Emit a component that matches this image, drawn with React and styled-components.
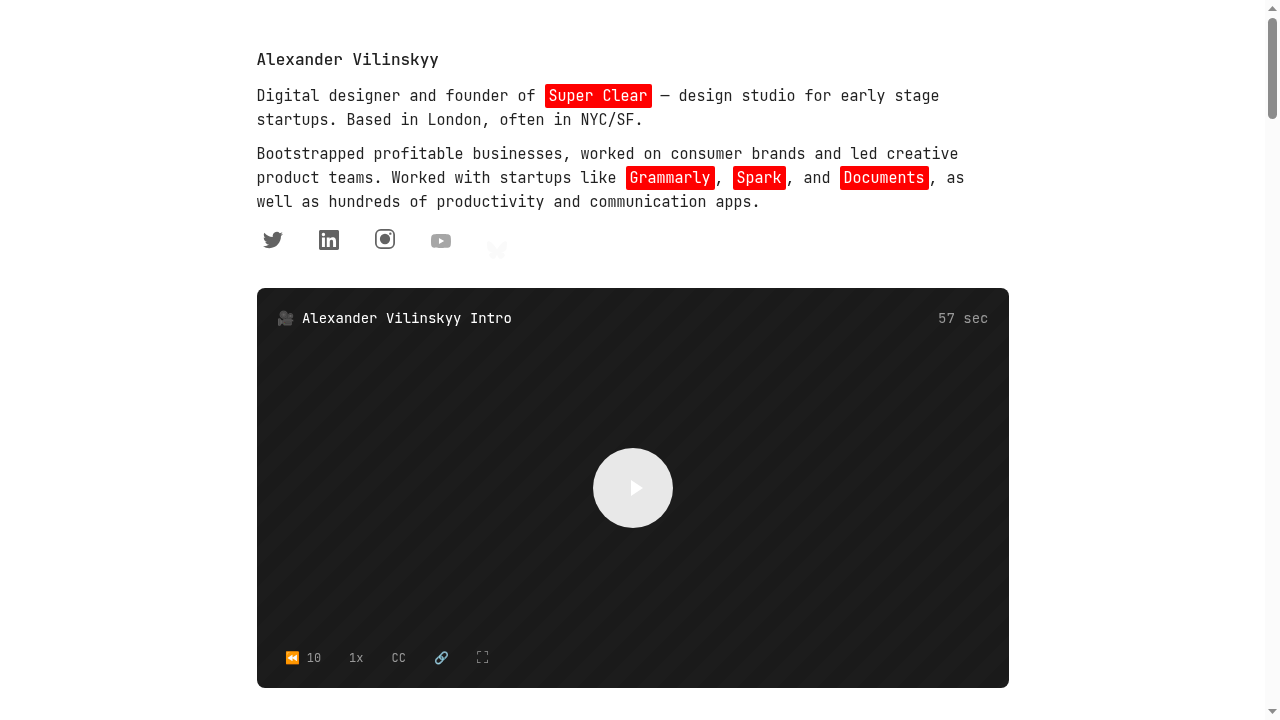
import React from "react";
import styled, { createGlobalStyle } from "styled-components";

const GlobalStyle = createGlobalStyle`
  *, *::before, *::after { box-sizing: border-box; }
  body {
    margin: 0;
    background: #fff;
    color: #222;
    font-family: "JetBrains Mono", "Liberation Mono", monospace;
    font-size: 15px;
    line-height: 24px;
  }
`;

const Shell = styled.div`
  display: flex;
  height: 100vh;
  overflow: hidden;
`;

const Page = styled.main`
  flex: 1;
  min-width: 0;
  padding: 48px 24px 32px;
`;

const Content = styled.div`
  max-width: 752px;
  margin: 0 auto;
  will-change: opacity;
`;

const Name = styled.h1`
  margin: 0 0 12px;
  font-size: 16px;
  line-height: 24px;
  font-weight: 500;
`;

const Paragraph = styled.p`
  margin: 0 0 10px;
`;

const Mark = styled.a`
  display: inline-block;
  padding: 0 4px;
  border-radius: 2px;
  background: #ff0000;
  color: #fff;
  text-decoration: none;
`;

const Socials = styled.nav`
  display: flex;
  gap: 24px;
  height: 64px;
`;

const Social = styled.a`
  display: flex;
  justify-content: center;
  width: 32px;
  height: 20px;
  margin-top: ${(p) => p.$drop}px;
  color: #222;
  opacity: ${(p) => p.$fade};

  svg { width: 20px; height: 20px; fill: currentColor; }
`;

const Player = styled.section`
  display: flex;
  flex-direction: column;
  justify-content: space-between;
  height: 400px;
  padding: 18px 20px;
  border-radius: 8px;
  background: linear-gradient(
      135deg,
      #1a1a1a 25%,
      #1c1c1c 25% 50%,
      #1a1a1a 50% 75%,
      #1c1c1c 75%
    )
    0 0 / 40px 40px;
`;

const PlayerHeader = styled.header`
  display: flex;
  justify-content: space-between;
  font-size: 14px;
`;

const PlayerTitle = styled.h2`
  margin: 0;
  font-size: 14px;
  font-weight: 400;
  color: #fff;
`;

const Duration = styled.span`
  color: #999;
`;

const PlayButton = styled.button`
  display: flex;
  align-items: center;
  justify-content: center;
  align-self: center;
  width: 80px;
  height: 80px;
  padding: 0;
  border: 0;
  border-radius: 50%;
  background: #e8e8e8;

  svg { width: 24px; height: 24px; fill: #fff; }
`;

const Controls = styled.div`
  display: flex;
  gap: 12px;
`;

const Control = styled.button`
  padding: 0 8px;
  border: 0;
  background: none;
  color: #999;
  font-family: inherit;
  font-size: ${(p) => (p.$large ? 16 : 12)}px;
  line-height: 24px;
`;

const Rail = styled.div`
  display: flex;
  flex-direction: column;
  align-items: center;
  width: 15px;
  padding: 6px 0;
  background: #fbfbfb;
`;

const Arrow = styled.svg`
  width: 9px;
  height: 5px;
  fill: #8b8b8b;
`;

const Thumb = styled.div`
  width: 9px;
  height: 101px;
  margin: 7px 0 auto;
  border-radius: 5px;
  background: #8b8b8b;
`;

const socials = [
  { name: "Twitter", drop: 6, fade: 0.7, path: "M23.953 4.57a10 10 0 01-2.825.775 4.958 4.958 0 002.163-2.723c-.951.555-2.005.959-3.127 1.184a4.92 4.92 0 00-8.384 4.482C7.69 8.095 4.067 6.13 1.64 3.162a4.822 4.822 0 00-.666 2.475c0 1.71.87 3.213 2.188 4.096a4.904 4.904 0 01-2.228-.616v.06a4.923 4.923 0 003.946 4.827 4.996 4.996 0 01-2.212.085 4.936 4.936 0 004.604 3.417 9.867 9.867 0 01-6.102 2.105c-.39 0-.779-.023-1.17-.067a13.995 13.995 0 007.557 2.209c9.053 0 13.998-7.496 13.998-13.985 0-.21 0-.42-.015-.63A9.935 9.935 0 0024 4.59z" },
  { name: "LinkedIn", drop: 6, fade: 0.7, path: "M20.447 20.452h-3.554v-5.569c0-1.328-.027-3.037-1.852-3.037-1.853 0-2.136 1.445-2.136 2.939v5.667H9.351V9h3.414v1.561h.046c.477-.9 1.637-1.85 3.37-1.85 3.601 0 4.267 2.37 4.267 5.455v6.286zM5.337 7.433a2.062 2.062 0 01-2.063-2.065 2.064 2.064 0 112.063 2.065zm1.782 13.019H3.555V9h3.564v11.452zM22.225 0H1.771C.792 0 0 .774 0 1.729v20.542C0 23.227.792 24 1.771 24h20.451C23.2 24 24 23.227 24 22.271V1.729C24 .774 23.2 0 22.222 0h.003z" },
  { name: "Instagram", drop: 5, fade: 0.7, path: "M7 0h10a7 7 0 017 7v10a7 7 0 01-7 7H7a7 7 0 01-7-7V7a7 7 0 017-7zm0 2.1A4.9 4.9 0 002.1 7v10A4.9 4.9 0 007 21.9h10a4.9 4.9 0 004.9-4.9V7A4.9 4.9 0 0017 2.1zM12 5.838a6.162 6.162 0 100 12.324 6.162 6.162 0 000-12.324zM18.406 4.155a1.44 1.44 0 100 2.881 1.44 1.44 0 000-2.881z" },
  { name: "YouTube", drop: 7, fade: 0.4, path: "M23.498 6.186a3.016 3.016 0 00-2.122-2.136C19.505 3.545 12 3.545 12 3.545s-7.505 0-9.377.505A3.017 3.017 0 00.502 6.186C0 8.07 0 12 0 12s0 3.93.502 5.814a3.016 3.016 0 002.122 2.136c1.871.505 9.376.505 9.376.505s7.505 0 9.377-.505a3.015 3.015 0 002.122-2.136C24 15.93 24 12 24 12s0-3.93-.502-5.814zM9.545 15.568V8.432L15.818 12l-6.273 3.568z" },
  { name: "Bluesky", drop: 16, fade: 0.02, path: "M5.2 2.86C7.95 4.93 10.91 9.12 12 11.37c1.09-2.25 4.05-6.44 6.8-8.51C20.78 1.37 24 .21 24 3.89c0 .73-.42 6.17-.67 7.05-.86 3.07-3.99 3.85-6.78 3.38 4.87.83 6.11 3.58 3.43 6.33-5.08 5.22-7.31-1.31-7.88-2.98-.1-.31-.15-.45-.1-.33.05-.12 0 .02-.1.33-.57 1.67-2.8 8.2-7.88 2.98-2.68-2.75-1.44-5.5 3.43-6.33-2.79.47-5.92-.31-6.78-3.38C.42 10.06 0 4.62 0 3.89 0 .21 3.22 1.37 5.2 2.86z" },
];

const controls = [
  { label: "Rewind 10 seconds", text: "⏪ 10" },
  { label: "Playback speed", text: "1x" },
  { label: "Captions", text: "CC" },
  { label: "Copy link", text: "🔗" },
  { label: "Full screen", text: "⛶", large: true },
];

export default function App() {
  return (
    <Shell>
      <GlobalStyle />
      <Page>
        <Content>
          <Name>Alexander Vilinskyy</Name>
          <Paragraph>
            Digital designer and founder of <Mark href="#super-clear">Super Clear</Mark> — design
            studio for early stage startups. Based in London, often in NYC/SF.
          </Paragraph>
          <Paragraph>
            Bootstrapped profitable businesses, worked on consumer brands and led creative product
            teams. Worked with startups like <Mark href="#grammarly">Grammarly</Mark>,{" "}
            <Mark href="#spark">Spark</Mark>, and <Mark href="#documents">Documents</Mark>, as well
            as hundreds of productivity and communication apps.
          </Paragraph>
          <Socials aria-label="Social profiles">
            {socials.map((s) => (
              <Social key={s.name} href={"#" + s.name} aria-label={s.name} $drop={s.drop} $fade={s.fade}>
                <svg viewBox="0 0 24 24" aria-hidden="true">
                  <path fillRule="evenodd" d={s.path} />
                </svg>
              </Social>
            ))}
          </Socials>
          <Player aria-label="Intro video">
            <PlayerHeader>
              <PlayerTitle>🎥 Alexander Vilinskyy Intro</PlayerTitle>
              <Duration>57 sec</Duration>
            </PlayerHeader>
            <PlayButton aria-label="Play">
              <svg viewBox="0 0 24 24" aria-hidden="true">
                <path d="M10 4v16l12-8z" />
              </svg>
            </PlayButton>
            <Controls>
              {controls.map((c) => (
                <Control key={c.label} aria-label={c.label} $large={c.large}>{c.text}</Control>
              ))}
            </Controls>
          </Player>
        </Content>
      </Page>
      <Rail aria-hidden="true">
        <Arrow viewBox="0 0 9 5"><path d="M4.5 0L9 5H0z" /></Arrow>
        <Thumb />
        <Arrow viewBox="0 0 9 5"><path d="M0 0h9L4.5 5z" /></Arrow>
      </Rail>
    </Shell>
  );
}
